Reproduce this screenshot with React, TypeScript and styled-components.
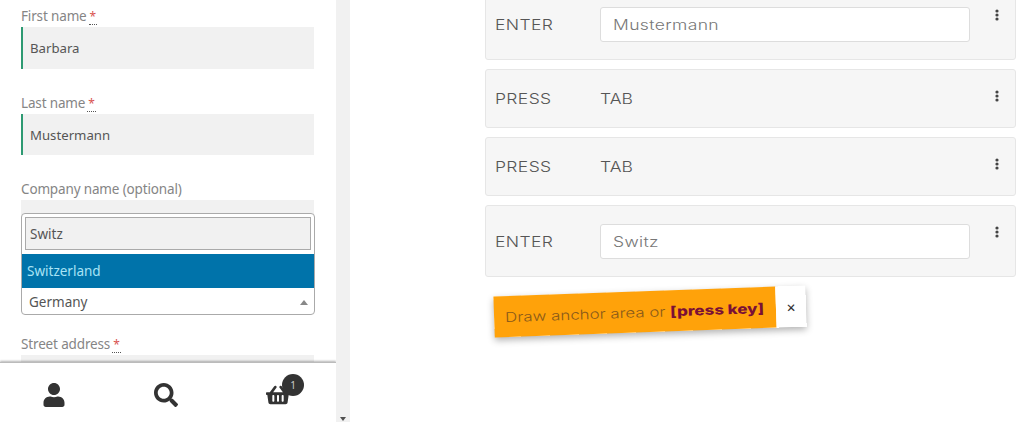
import React from 'react';
import styled, { createGlobalStyle } from 'styled-components';
import { FaUser, FaSearch, FaShoppingBasket } from 'react-icons/fa';

const GlobalStyle = createGlobalStyle`
  html, body {
    margin: 0;
    padding: 0;
    background: #fff;
    overflow: hidden;
  }
  * { box-sizing: border-box; }
`;

const Page = styled.div`
  display: flex;
  width: 1024px;
  height: 422px;
  overflow: hidden;
`;

const ShopPane = styled.div`
  position: relative;
  flex: none;
  width: 336px;
  height: 422px;
  overflow: hidden;
  font-family: "Noto Sans", "Open Sans", sans-serif;
`;

const Form = styled.form`
  display: flex;
  flex-direction: column;
  padding: 5px 22px 0 21px;
`;

const FieldLabel = styled.div`
  height: 22px;
  font-size: 13.5px;
  line-height: 22px;
  letter-spacing: -0.15px;
  color: #858585;
`;

const Required = styled.span`
  display: inline-block;
  height: 14px;
  margin-left: 2px;
  padding: 0 1px;
  font-size: 12px;
  line-height: 12px;
  vertical-align: 0;
  color: #d9534f;
  border-bottom: 1px dotted #555;
`;

const TextField = styled.div<{ $valid?: boolean; $height: number; $gap: number }>`
  display: flex;
  align-items: center;
  height: ${(p) => p.$height}px;
  margin-bottom: ${(p) => p.$gap}px;
  padding-left: 7px;
  border-left: 2px solid ${(p) => (p.$valid ? '#2e9a72' : 'transparent')};
  background: #f1f1f1;
  font-size: 13.2px;
  color: #555;
`;

const Popup = styled.div`
  position: absolute;
  top: 213px;
  left: 21px;
  width: 294px;
  height: 102px;
  border: 1px solid #aaa;
  border-radius: 4px;
  background: #fff;
  font-size: 13.5px;
`;

const SearchBox = styled.div`
  display: flex;
  align-items: center;
  height: 33px;
  margin: 3px 3px 4px;
  padding-left: 4px;
  border: 1px solid #aaa;
  background: #f1f1f1;
  color: #555;
`;

const Highlighted = styled.div`
  display: flex;
  align-items: center;
  height: 34px;
  padding-left: 5px;
  background: #0073aa;
  color: #a9e3f5;
`;

const Selected = styled.div`
  display: flex;
  align-items: center;
  justify-content: space-between;
  height: 26px;
  padding: 2px 6px 0 7px;
  color: #555;
`;

const CaretUp = styled.span`
  width: 0;
  height: 0;
  border-left: 4px solid transparent;
  border-right: 4px solid transparent;
  border-bottom: 5px solid #888;
`;

const BottomBar = styled.div`
  position: absolute;
  left: 0;
  right: 0;
  bottom: 0;
  height: 60px;
  display: grid;
  grid-template-columns: 108px 116px 108px;
  justify-items: center;
  align-items: center;
  padding-top: 5px;
  background: #fff;
  border-top: 1px solid #bbb;
  box-shadow: 0 -1px 2px rgba(0, 0, 0, 0.3);
  color: #333;
  font-size: 24px;
`;

const CartLink = styled.div`
  position: relative;
  display: flex;
`;

const Badge = styled.span`
  position: absolute;
  top: -9px;
  left: 16px;
  width: 22px;
  height: 22px;
  display: flex;
  align-items: center;
  justify-content: center;
  border-radius: 50%;
  background: #333;
  color: #ccc;
  font-size: 10px;
`;

const Scrollbar = styled.div`
  display: flex;
  flex: none;
  flex-direction: column;
  justify-content: flex-end;
  align-items: center;
  width: 14px;
  height: 422px;
  padding-bottom: 1px;
  background: #f1f1f1;
`;

const ArrowDown = styled.span`
  width: 0;
  height: 0;
  border-left: 3px solid transparent;
  border-right: 3px solid transparent;
  border-top: 4px solid #505050;
`;

const RecorderPane = styled.div`
  display: flex;
  flex-direction: column;
  flex: 1;
  min-width: 0;
  gap: 9px;
  margin-top: -12px;
  padding: 0 8px 0 135px;
  font-family: "Inter", "Liberation Sans", sans-serif;
`;

const StepCard = styled.div<{ $tall?: boolean }>`
  display: flex;
  align-items: center;
  height: ${(p) => (p.$tall ? 72 : 59)}px;
  padding: 0 16px 0 9px;
  border: 1px solid #e6e6e6;
  border-radius: 3px;
  background: #f6f6f6;
`;

/* the recorder's own font is a wide geometric face, none is installed */
const Wide = styled.span`
  display: inline-block;
  font-weight: 300;
  white-space: nowrap;
  transform: scaleX(1.25);
  transform-origin: left center;
`;

const StepAction = styled.div`
  flex: none;
  width: 105px;
  font-size: 14px;
  letter-spacing: 0.3px;
  color: #555;
`;

const StepKey = styled.div`
  font-size: 14px;
  color: #555;
`;

const StepInput = styled.div`
  display: flex;
  align-items: center;
  flex: none;
  width: 370px;
  height: 35px;
  padding-left: 12px;
  border: 1px solid #ddd;
  border-radius: 3px;
  background: #fff;
  font-size: 14px;
  letter-spacing: 0.3px;
  color: #777;
`;

const Kebab = styled.svg`
  align-self: flex-start;
  flex: none;
  margin: 20px 0 0 auto;
`;

const Hint = styled.div`
  display: flex;
  align-self: flex-start;
  height: 41px;
  margin: 5px 0 0 9px;
  transform: rotate(-2deg);
  box-shadow: 0 3px 7px rgba(0, 0, 0, 0.3);
`;

const HintText = styled.div`
  display: flex;
  align-items: center;
  width: 282px;
  padding-left: 11px;
  background: #ffa20a;
  color: #8a5a1a;
  font-size: 13.5px;
`;

const HintKey = styled.span`
  font-weight: 800;
  color: #7a1036;
`;

const HintClose = styled.div`
  display: flex;
  align-items: center;
  justify-content: center;
  width: 30px;
  background: #fff;
  color: #333;
  font-size: 15px;
`;

const KebabIcon = () => (
  <Kebab width="4" height="12" viewBox="0 0 4 12">
    <circle cx="2" cy="2" r="1.6" fill="#444" />
    <circle cx="2" cy="6" r="1.6" fill="#444" />
    <circle cx="2" cy="10" r="1.6" fill="#444" />
  </Kebab>
);

const App: React.FC = () => (
  <Page>
    <GlobalStyle />
    <ShopPane>
      <Form>
        <FieldLabel>First name<Required>*</Required></FieldLabel>
        <TextField $valid $height={42} $gap={23}>Barbara</TextField>
        <FieldLabel>Last name<Required>*</Required></FieldLabel>
        <TextField $valid $height={41} $gap={23}>Mustermann</TextField>
        <FieldLabel>Company name (optional)</FieldLabel>
        <TextField $height={42} $gap={91} />
        <FieldLabel>Street address<Required>*</Required></FieldLabel>
        <TextField $height={42} $gap={0} />
      </Form>
      <Popup>
        <SearchBox>Switz</SearchBox>
        <Highlighted>Switzerland</Highlighted>
        <Selected>Germany<CaretUp /></Selected>
      </Popup>
      <BottomBar>
        <FaUser />
        <FaSearch />
        <CartLink>
          <FaShoppingBasket />
          <Badge>1</Badge>
        </CartLink>
      </BottomBar>
    </ShopPane>
    <Scrollbar><ArrowDown /></Scrollbar>
    <RecorderPane>
      <StepCard $tall>
        <StepAction><Wide>ENTER</Wide></StepAction>
        <StepInput><Wide>Mustermann</Wide></StepInput>
        <KebabIcon />
      </StepCard>
      <StepCard>
        <StepAction><Wide>PRESS</Wide></StepAction>
        <StepKey><Wide>TAB</Wide></StepKey>
        <KebabIcon />
      </StepCard>
      <StepCard>
        <StepAction><Wide>PRESS</Wide></StepAction>
        <StepKey><Wide>TAB</Wide></StepKey>
        <KebabIcon />
      </StepCard>
      <StepCard $tall>
        <StepAction><Wide>ENTER</Wide></StepAction>
        <StepInput><Wide>Switz</Wide></StepInput>
        <KebabIcon />
      </StepCard>
      <Hint>
        <HintText><Wide>Draw anchor area or <HintKey>[press key]</HintKey></Wide></HintText>
        <HintClose>×</HintClose>
      </Hint>
    </RecorderPane>
  </Page>
);

export default App;
